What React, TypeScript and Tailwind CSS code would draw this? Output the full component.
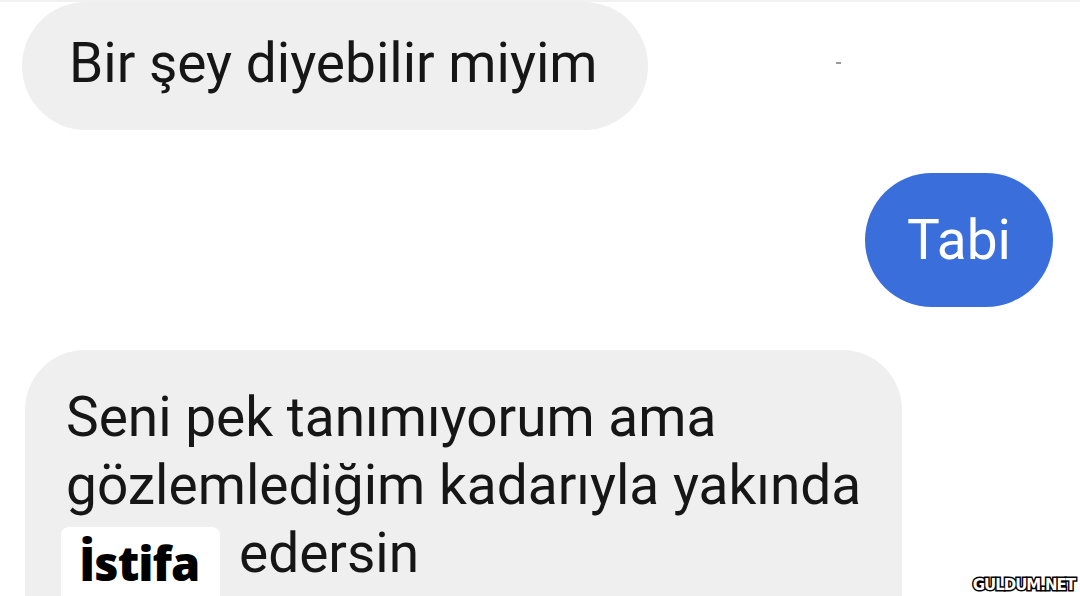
import * as React from "react";

const roboto = "font-['Roboto','Liberation_Sans',sans-serif]";

function Bubble({ children, className }: { children: React.ReactNode; className: string }) {
  return <div className={className}>{children}</div>;
}

export default function App() {
  return (
    <div className={`relative flex h-[596px] w-[1080px] flex-col overflow-hidden border-t-2 border-[#f1f1f1] bg-white ${roboto}`}>
      {/* incoming */}
      <Bubble className="ml-[22px] flex h-[128px] w-[626px] items-center rounded-full bg-[#efefef] pb-[6px] pl-[47px]">
        <span className="text-[55px] leading-none text-[#161616]">Bir şey diyebilir miyim</span>
      </Bubble>

      {/* outgoing */}
      <Bubble className="mt-[43px] mr-[27px] flex h-[134px] w-[188px] items-center justify-center self-end rounded-full bg-[#3a6fdb]">
        <span className="text-[55px] leading-none text-white">Tabi</span>
      </Bubble>

      {/* incoming, long */}
      <div className="mt-[43px] ml-[25px] w-[877px] flex-1 rounded-t-[60px] bg-[#efefef] pt-[33px] pl-[41px] text-[55px] leading-[68px] text-[#161616]">
        <div>Seni pek tanımıyorum ama</div>
        <div>gözlemlediğim kadarıyla yakında</div>
        <div className="flex h-[68px]">
          <div className="-ml-[5px] mt-[8px] h-[70px] w-[159px] shrink-0 rounded-t-[8px] bg-white pl-[18px] font-['Open_Sans',sans-serif] text-[47px] font-extrabold leading-[72px] tracking-[-1px] text-black">
            İstifa
          </div>
          <span className="ml-[19px]">edersin</span>
        </div>
      </div>

      {/* stray mark */}
      <span className="absolute left-[836px] top-[60px] h-[2px] w-[5px] bg-[#9a9a9a]" />

      {/* watermark */}
      <span className="absolute right-[5px] bottom-[3px] font-['DejaVu_Sans',sans-serif] text-[15px] font-bold leading-none tracking-[-1px] text-white [-webkit-text-stroke:3px_#000] [paint-order:stroke_fill]">
        GULDUM.NET
      </span>
    </div>
  );
}
